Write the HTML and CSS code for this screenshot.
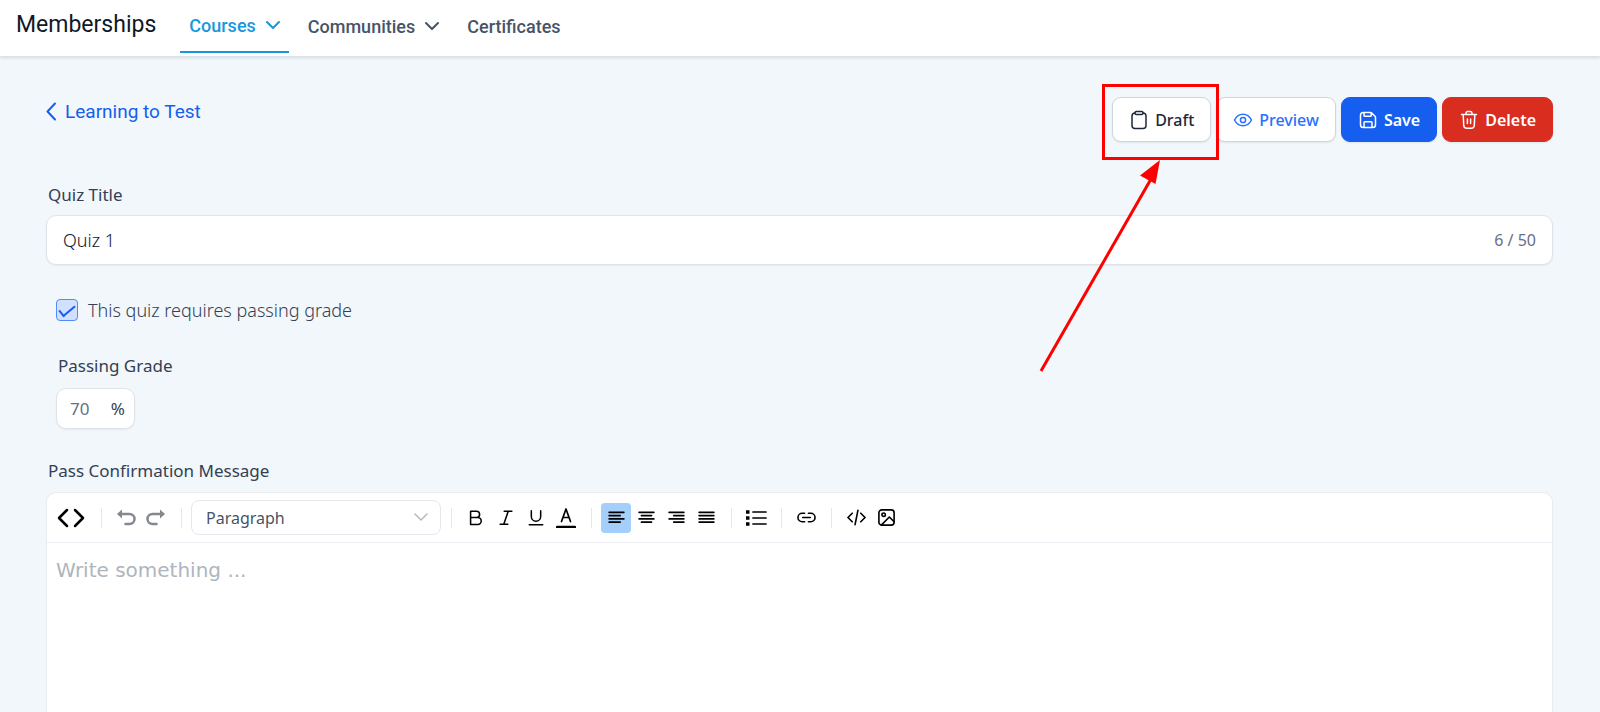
FILE: index.html
```html
<!DOCTYPE html>
<html lang="en">
<head>
    <meta charset="UTF-8">
    <title>Memberships - Edit Quiz</title>
    <link rel="stylesheet" href="styles.css">
</head>
<body>
    <header class="topbar">
        <h1 class="brand">Memberships</h1>
        <nav class="nav">
            <a href="#" class="nav-link active">Courses
                <svg width="14" height="14" viewBox="0 0 14 14"><path d="M1 3l6 6 6-6"/></svg>
            </a>
            <a href="#" class="nav-link">Communities
                <svg width="14" height="14" viewBox="0 0 14 14"><path d="M1 3l6 6 6-6"/></svg>
            </a>
            <a href="#" class="nav-link">Certificates</a>
        </nav>
    </header>

    <main class="page">
        <div class="page-head">
            <a href="#" class="back-link">
                <svg width="12" height="20" viewBox="0 0 12 20"><path d="M9 2.500L1.500 10.500 9 18.500"/></svg>
                Learning to Test
            </a>
            <div class="actions">
                <button type="button" class="btn btn-preview">
                    <svg width="20" height="20" viewBox="0 0 20 20"><path d="M1.500 10C3.500 6.200 6.500 4.200 10 4.200s6.500 2 8.500 5.800c-2 3.800-5 5.800-8.500 5.800S3.500 13.800 1.500 10z"/><circle cx="10" cy="10" r="2.600"/></svg>
                    Preview
                </button>
                <button type="button" class="btn btn-save">
                    <svg width="20" height="20" viewBox="0 0 20 20"><path d="M6 2.500v3c0 .5.300.8.800.8h5.600c.5 0 .8-.3.800-.8V3M6 17.500v-5c0-.5.300-.8.800-.8h6.400c.5 0 .8.300.8.800v5M17.500 7.500v7.200c0 1.900-.9 2.800-2.800 2.800H5.300c-1.900 0-2.800-.9-2.800-2.800V5.300c0-1.900.9-2.800 2.800-2.800h7.200c.5 0 .9.200 1.200.5l3.300 3.300c.3.300.5.700.5 1.200z"/></svg>
                    Save
                </button>
                <button type="button" class="btn btn-delete">
                    <svg width="20" height="20" viewBox="0 0 20 20"><path d="M7 4.500V3.200c0-1 .6-1.700 1.700-1.700h2.600c1.100 0 1.700.7 1.700 1.700v1.300M2.500 4.500h15M4.200 4.500l.5 10.800c.1 2 1 3 3 3h4.600c2 0 2.900-1 3-3l.5-10.800M8.400 9v4.500M11.600 9v4.500"/></svg>
                    Delete
                </button>
                <div class="draft">
                    <button type="button" class="btn btn-draft">
                        <svg width="20" height="20" viewBox="0 0 20 20"><path d="M6 3c-1.900.1-3 1.100-3 3V15.500c0 2 1 3 3 3h8c2 0 3-1 3-3V6c0-1.900-1.100-2.900-3-3"/><rect x="6" y="1.500" width="8" height="3" rx="1.300"/></svg>
                        Draft
                    </button>
                    <div class="highlight"></div>
                    <svg class="arrow" width="124" height="214" viewBox="0 0 124 214"><path class="shaft" d="M2 212L112 20"/><path class="tip" d="M121 1L101 16.500 116.500 25z"/></svg>
                </div>
            </div>
        </div>

        <label class="label" for="quiz-title">Quiz Title</label>
        <div class="field">
            <input type="text" id="quiz-title" value="Quiz 1" maxlength="50">
            <span class="counter">6 / 50</span>
        </div>

        <div class="grade">
            <label class="check">
                <input type="checkbox" checked>
                This quiz requires passing grade
            </label>
            <label class="label" for="passing-grade">Passing Grade</label>
            <div class="field field-small">
                <input type="text" id="passing-grade" value="70">
                <span>%</span>
            </div>
        </div>

        <label class="label" for="pass-message">Pass Confirmation Message</label>
        <div class="editor">
            <div class="toolbar">
                <button type="button" class="tool tool-source" aria-label="Source"><svg width="28" height="20" viewBox="0 0 28 20"><path class="bold" d="M10 2l-8 8 8 8M18 2l8 8-8 8"/></svg></button>
                <span class="divider"></span>
                <button type="button" class="tool muted" aria-label="Undo"><svg width="20" height="20" viewBox="0 0 20 20"><path class="bold" d="M3 6h10.500a4.500 4.500 0 0 1 0 10H9.500"/><path class="fill" d="M1 6l5-4.500v9z"/></svg></button>
                <button type="button" class="tool muted" aria-label="Redo"><svg width="20" height="20" viewBox="0 0 20 20"><path class="bold" d="M17 6H6.500a4.500 4.500 0 0 0 0 10h4"/><path class="fill" d="M19 6l-5-4.500v9z"/></svg></button>
                <span class="divider"></span>
                <div class="format">
                    <select aria-label="Format">
                        <option>Paragraph</option>
                        <option>Heading 1</option>
                        <option>Heading 2</option>
                    </select>
                    <svg width="14" height="14" viewBox="0 0 14 14"><path d="M1 4l6 6 6-6"/></svg>
                </div>
                <span class="divider"></span>
                <button type="button" class="tool" aria-label="Bold"><svg width="18" height="18" viewBox="0 0 20 20"><path d="M4 2.500h6.500a3.500 3.500 0 0 1 0 7H4zM4 9.500h8a3.800 3.800 0 0 1 0 7.600H4z"/></svg></button>
                <button type="button" class="tool" aria-label="Italic"><svg width="18" height="18" viewBox="0 0 20 20"><path d="M8 2.500h8.500M3.500 17H12M12.500 2.500l-5 14.500"/></svg></button>
                <button type="button" class="tool" aria-label="Underline"><svg width="18" height="18" viewBox="0 0 20 20"><path d="M4.800 2v6.300a5.200 5.200 0 0 0 10.400 0V2M2.500 17.500h15"/></svg></button>
                <button type="button" class="tool" aria-label="Text color"><svg width="20" height="20" viewBox="0 0 20 20"><path d="M5.500 13.500L10 1 14.500 13.500M7 9.500h6"/><path class="bold" d="M1 19h18"/></svg></button>
                <span class="divider"></span>
                <button type="button" class="tool selected" aria-label="Align left"><svg width="17" height="13" viewBox="0 0 18 14"><path d="M1 1.500h16M1 5h12M1 8.500h16M1 12h12"/></svg></button>
                <button type="button" class="tool" aria-label="Align center"><svg width="17" height="13" viewBox="0 0 18 14"><path d="M1 1.500h16M3.500 5h11M1 8.500h16M3.500 12h11"/></svg></button>
                <button type="button" class="tool" aria-label="Align right"><svg width="17" height="13" viewBox="0 0 18 14"><path d="M1 1.500h16M6 5h11M1 8.500h16M6 12h11"/></svg></button>
                <button type="button" class="tool" aria-label="Justify"><svg width="17" height="13" viewBox="0 0 18 14"><path d="M1 1.500h16M1 5h16M1 8.500h16M1 12h16"/></svg></button>
                <span class="divider"></span>
                <button type="button" class="tool" aria-label="Bullet list"><svg width="22" height="18" viewBox="0 0 22 18"><path d="M8 3h13M8 9h13M8 15h13"/><path class="fill" d="M1 1.200h3.500v3.500H1zM1 7.200h3.500v3.500H1zM1 13.200h3.500v3.500H1z"/></svg></button>
                <span class="divider"></span>
                <button type="button" class="tool" aria-label="Link"><svg width="19" height="19" viewBox="0 0 20 20"><path d="M8 5.500H5.500a4.500 4.500 0 0 0 0 9H8M12 5.500h2.500a4.500 4.500 0 0 1 0 9H12M6 10h8"/></svg></button>
                <span class="divider"></span>
                <button type="button" class="tool" aria-label="Code"><svg width="19" height="19" viewBox="0 0 20 20"><path d="M5.500 5.500L1 10l4.500 4.500M14.500 5.500L19 10l-4.500 4.500M11.500 2.500l-3 15"/></svg></button>
                <button type="button" class="tool" aria-label="Image"><svg width="19" height="19" viewBox="0 0 20 20"><rect x="2" y="2" width="16" height="16" rx="3"/><circle cx="7" cy="7" r="1.800"/><path d="M4.500 18L13 9.500l5 5"/></svg></button>
            </div>
            <textarea id="pass-message" placeholder="Write something ..."></textarea>
        </div>
    </main>
</body>
</html>
```

FILE: styles.css
```css
* {
    box-sizing: border-box;
}

body {
    display: flex;
    flex-direction: column;
    min-height: 100vh;
    margin: 0;
    font-family: "Noto Sans", sans-serif;
    font-size: 17px;
    color: #344054;
    background-color: #f1f7fa;
}

button, input, select, textarea {
    font: inherit;
    color: inherit;
}

svg {
    display: block;
    flex-shrink: 0;
    fill: none;
    stroke: currentColor;
    stroke-width: 2;
    stroke-linecap: round;
    stroke-linejoin: round;
}

/* Top navigation */
.topbar {
    display: flex;
    height: 57px;
    padding-left: 16px;
    background-color: #fff;
    border-bottom: 1px solid #dde2e6;
    box-shadow: 0 1px 3px rgba(0, 0, 0, 0.12);
    font-family: Roboto, sans-serif;
}

.brand {
    margin: 0 24px 0 0;
    font-size: 23px;
    font-weight: 400;
    line-height: 50px;
    color: #101828;
}

.nav {
    display: flex;
    gap: 10px;
}

.nav-link {
    display: flex;
    align-items: center;
    gap: 10px;
    height: 53px;
    padding: 0 9px;
    font-size: 18px;
    font-weight: 500;
    color: #475467;
    text-decoration: none;
}

.nav-link.active {
    color: #1897db;
    border-bottom: 2px solid #1897db;
}

/* Page */
.page {
    display: flex;
    flex-direction: column;
    flex: 1;
    padding: 40px 47px 0 46px;
}

.page-head {
    display: flex;
    justify-content: space-between;
    height: 86px;
}

.back-link {
    display: flex;
    align-items: center;
    gap: 7px;
    height: 28px;
    font-family: Roboto, sans-serif;
    font-size: 19px;
    color: #155eef;
    text-decoration: none;
}

.actions {
    display: flex;
    align-items: flex-start;
    gap: 5px;
}

.btn {
    display: flex;
    align-items: center;
    justify-content: center;
    gap: 6px;
    height: 45px;
    padding: 0 16px;
    border: 1px solid #d0d5dd;
    border-radius: 9px;
    background-color: #fff;
    box-shadow: 0 1px 2px rgba(16, 24, 40, 0.08);
    font-size: 16px;
    font-weight: 500;
}

.btn svg {
    stroke-width: 1.5;
}

.btn-draft {
    color: #1d2939;
}

.btn-preview {
    color: #2970ff;
}

.btn-save {
    color: #fff;
    background-color: #155eef;
    border-color: #155eef;
    font-weight: 600;
}

.btn-delete {
    color: #fff;
    background-color: #d92d20;
    border-color: #d92d20;
    font-weight: 600;
}

/* Pointer to the Draft button */
.draft {
    position: relative;
    order: -1;
}

.highlight {
    position: absolute;
    top: -13px;
    right: -8px;
    bottom: -18px;
    left: -10px;
    border: 3px solid #f00;
}

.arrow {
    position: absolute;
    top: 62px;
    right: 48px;
    color: #f00;
    pointer-events: none;
}

.arrow .shaft {
    stroke-width: 3;
    stroke-linecap: butt;
}

.arrow .tip {
    fill: currentColor;
    stroke: none;
}

/* Form */
.label {
    display: block;
    padding-left: 2px;
    line-height: 24px;
}

.field {
    display: flex;
    align-items: center;
    height: 50px;
    margin-top: 8px;
    padding: 0 16px;
    border: 1px solid #e0e4ea;
    border-radius: 10px;
    background-color: #fff;
    box-shadow: 0 1px 2px rgba(16, 24, 40, 0.06);
}

.field input {
    flex: 1;
    min-width: 0;
    padding: 0;
    border: none;
    outline: none;
    background: none;
    font-size: 18px;
    font-weight: 300;
    color: #101828;
}

.counter {
    font-size: 16px;
    color: #667085;
}

.grade {
    padding: 31px 10px 30px;
}

.check {
    display: flex;
    align-items: center;
    gap: 10px;
    margin-bottom: 30px;
    line-height: 28px;
    font-size: 18px;
    font-weight: 300;
}

.check input {
    appearance: none;
    width: 22px;
    height: 22px;
    margin: 0;
    border: 1px solid #528bff;
    border-radius: 4px;
    background-color: #d1e0ff;
    display: flex;
    justify-content: center;
}

/* Tick mark */
.check input:checked::before {
    content: "";
    width: 14px;
    height: 6px;
    margin-top: 5px;
    border: solid #155eef;
    border-width: 0 0 2px 2px;
    transform: rotate(-40deg);
}

.field-small {
    width: 79px;
    height: 41px;
    margin-top: 10px;
    padding: 0 9px 0 13px;
}

.field-small input {
    font-size: 17px;
    font-weight: 400;
    color: #667085;
}

/* Editor */
.editor {
    display: flex;
    flex-direction: column;
    flex: 1;
    margin-top: 9px;
    border: 1px solid #eaecf0;
    border-bottom: none;
    border-radius: 10px 10px 0 0;
    background-color: #fff;
}

.toolbar {
    display: flex;
    align-items: center;
    height: 50px;
    padding-left: 8px;
    border-bottom: 1px solid #eceef3;
    color: #000;
}

.tool {
    display: flex;
    align-items: center;
    justify-content: center;
    width: 30px;
    height: 30px;
    padding: 0;
    border: none;
    border-radius: 4px;
    background: none;
}

.tool svg {
    stroke-width: 1.7;
}

.tool .bold {
    stroke-width: 2.5;
}

.tool .fill {
    fill: currentColor;
    stroke: none;
}

.tool-source {
    width: 36px;
    padding-right: 4px;
}

.tool.muted {
    color: #85888e;
}

.tool.selected {
    background-color: #a3cffa;
}

.divider {
    width: 1px;
    height: 20px;
    margin: 0 9px 0 10px;
    background-color: #e4e7ec;
}

.format {
    position: relative;
    width: 250px;
    color: #475467;
}

.format select {
    appearance: none;
    width: 100%;
    height: 35px;
    padding: 0 14px;
    border: 1px solid #e4e7ec;
    border-radius: 8px;
    background-color: #fff;
    font-size: 16px;
}

.format svg {
    position: absolute;
    top: 10px;
    right: 13px;
    color: #b5b9c0;
    stroke-width: 1.5;
    pointer-events: none;
}

textarea {
    display: block;
    flex: 1;
    width: 100%;
    min-height: 160px;
    padding: 15px 9px;
    border: none;
    outline: none;
    resize: none;
    background: none;
    font-family: "DejaVu Sans", sans-serif;
    font-size: 20px;
}

textarea::placeholder {
    color: #adb5bd;
}
```
